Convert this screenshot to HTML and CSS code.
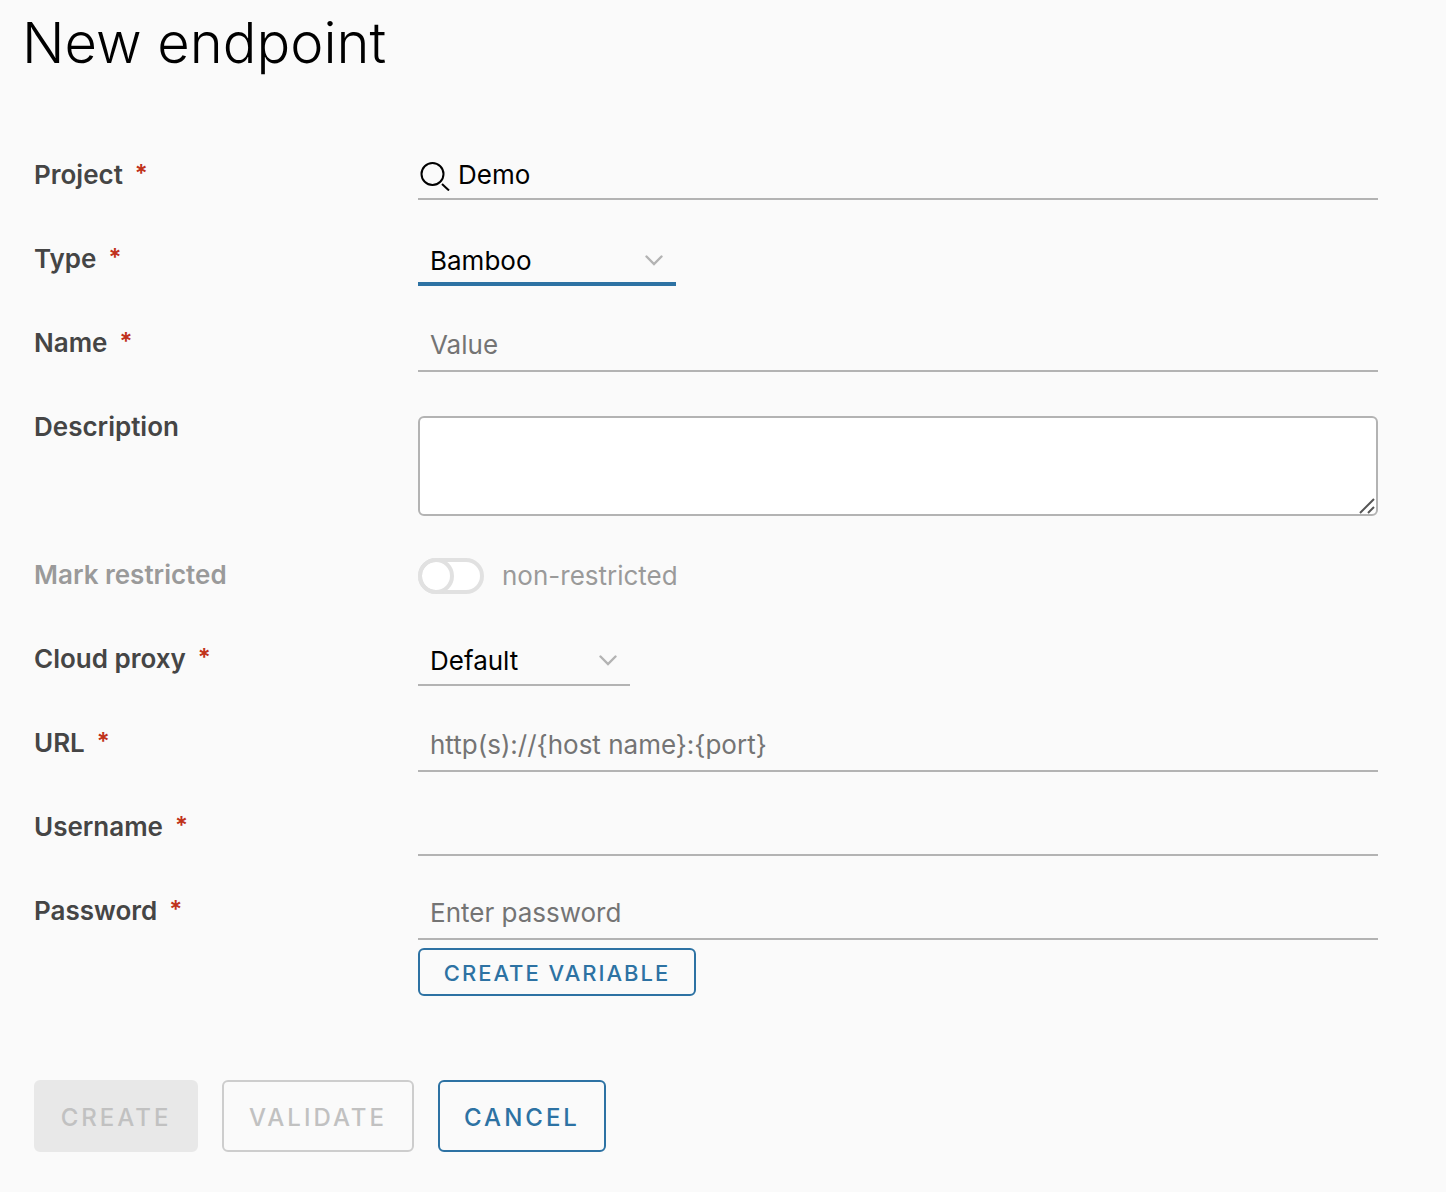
FILE: index.html
```html
<!DOCTYPE html>
<html lang="en">
<head>
<meta charset="utf-8">
<meta name="viewport" content="width=device-width, initial-scale=1">
<title>New endpoint</title>
<link rel="stylesheet" href="styles.css">
</head>
<body>
<main class="page">
  <h1 class="title">New endpoint</h1>
  <form class="form">
    <div class="row">
      <label class="label required" for="project">Project</label>
      <div class="control search">
        <svg class="search-icon" viewBox="0 0 32 32" aria-hidden="true"><circle cx="14.5" cy="15" r="11"/><path d="M24 25l7 6.500"/></svg>
        <input class="search-input" id="project" type="text" value="Demo">
      </div>
    </div>
    <div class="row">
      <label class="label required" for="type">Type</label>
      <div class="control select select-type">
        <select class="select-field focused" id="type"><option>Bamboo</option></select>
        <svg class="caret" viewBox="0 0 20 12" aria-hidden="true"><path d="M2.500 1.500l7.500 7.500L17.500 1.500"/></svg>
      </div>
    </div>
    <div class="row">
      <label class="label required" for="name">Name</label>
      <input class="control input" id="name" type="text" placeholder="Value">
    </div>
    <div class="row">
      <label class="label" for="description">Description</label>
      <div class="control area">
        <textarea class="textarea" id="description"></textarea>
        <svg class="grip" viewBox="0 0 16 16" aria-hidden="true"><path d="M1 15L15 1M9 15l6-6"/></svg>
      </div>
    </div>
    <div class="row">
      <label class="label disabled" for="restricted">Mark restricted</label>
      <div class="control toggle">
        <input class="switch" id="restricted" type="checkbox" role="switch" disabled>
        <label class="toggle-text" for="restricted">non-restricted</label>
      </div>
    </div>
    <div class="row">
      <label class="label required" for="proxy">Cloud proxy</label>
      <div class="control select select-proxy">
        <select class="select-field" id="proxy"><option>Default</option></select>
        <svg class="caret" viewBox="0 0 20 12" aria-hidden="true"><path d="M2.500 1.500l7.500 7.500L17.500 1.500"/></svg>
      </div>
    </div>
    <div class="row">
      <label class="label required" for="url">URL</label>
      <input class="control input" id="url" type="text" placeholder="http(s)://{host name}:{port}">
    </div>
    <div class="row">
      <label class="label required" for="username">Username</label>
      <input class="control input" id="username" type="text">
    </div>
    <div class="row">
      <label class="label required" for="password">Password</label>
      <div class="control stack">
        <input class="input" id="password" type="password" placeholder="Enter password">
        <button class="button small variable" type="button">CREATE VARIABLE</button>
      </div>
    </div>
    <div class="actions">
      <button class="button solid create" type="submit" disabled>CREATE</button>
      <button class="button validate" type="button" disabled>VALIDATE</button>
      <button class="button cancel" type="button">CANCEL</button>
    </div>
  </form>
</main>
</body>
</html>
```
FILE: styles.css
```css
*,
*::before,
*::after {
  box-sizing: border-box;
}

body {
  margin: 0;
  background: #fafafa;
  color: #000;
  font: 26px/36px Inter, "Liberation Sans", sans-serif;
}

.page {
  padding: 8px 68px 40px 22px;
}

.title {
  margin: 0 0 72px;
  padding-bottom: 2px;
  font-size: 56px;
  font-weight: 300;
  line-height: 70px;
}

.form {
  display: flex;
  flex-direction: column;
  gap: 24px;
  padding-left: 12px;
}

.row {
  display: grid;
  grid-template-columns: 384px minmax(0, 1fr);
  align-items: start;
  min-height: 60px;
}

.label {
  padding: 5px 0 7px;
  color: #454545;
  font-weight: 600;
}

.label.disabled {
  color: #9a9a9a;
}

.required::after {
  content: "*";
  display: inline-block;
  margin-left: 12px;
  padding-bottom: 2px;
  vertical-align: top;
  font-size: 24px;
  line-height: 34px;
  color: #c0321b;
}

.input,
.search-input,
.select-field,
.textarea {
  width: 100%;
  margin: 0;
  border: 0;
  border-radius: 0;
  outline: 0;
  background: transparent;
  color: #000;
  font: inherit;
}

.input {
  height: 52px;
  padding: 0 12px 2px;
  border-bottom: 2px solid #b3b3b3;
}

.input::placeholder {
  color: #747474;
  opacity: 1;
}

.search {
  display: flex;
  align-items: center;
  gap: 8px;
  height: 48px;
  border-bottom: 2px solid #b3b3b3;
}

.search-icon {
  flex: none;
  width: 32px;
  height: 32px;
  fill: none;
  stroke: #000;
  stroke-width: 2;
}

.search-input {
  padding: 0;
}

.select {
  display: grid;
  align-items: center;
}

.select-type {
  width: 258px;
}

.select-proxy {
  width: 212px;
}

.select-field,
.caret {
  grid-area: 1 / 1;
}

.select-field {
  height: 50px;
  padding: 2px 48px 0 12px;
  border-bottom: 2px solid #b3b3b3;
  appearance: none;
}

.select-field.focused {
  padding-top: 4px;
  border-bottom: 4px solid #2d72a3;
}

.caret {
  justify-self: end;
  width: 20px;
  height: 12px;
  margin-right: 12px;
  fill: none;
  stroke: #b3b3b3;
  stroke-width: 2.400;
  stroke-linecap: round;
  pointer-events: none;
}

.area {
  position: relative;
  margin-top: 12px;
  height: 112px;
}

.textarea {
  display: block;
  height: 100px;
  padding: 8px 12px;
  border: 2px solid #b3b3b3;
  border-radius: 6px;
  background: #fff;
  resize: none;
}

.grip {
  position: absolute;
  right: 3px;
  top: 82px;
  width: 16px;
  height: 16px;
  stroke: #555;
  stroke-width: 2;
  pointer-events: none;
}

.toggle {
  display: flex;
  align-items: center;
  gap: 18px;
  height: 48px;
  color: #9a9a9a;
}

.switch {
  display: block;
  width: 66px;
  height: 36px;
  margin: 0;
  border: 4px solid #e1e1e1;
  border-radius: 18px;
  background: #fff;
  appearance: none;
}

.switch::before {
  content: "";
  display: block;
  width: 36px;
  height: 36px;
  margin: -4px;
  border: 4px solid #e1e1e1;
  border-radius: 50%;
}

.stack {
  display: flex;
  flex-direction: column;
  align-items: flex-start;
  gap: 8px;
}

.button {
  height: 72px;
  padding: 4px 0 0;
  border: 2px solid #2d72a3;
  border-radius: 6px;
  background: transparent;
  color: #2d72a3;
  font: 500 24px/32px Inter, "Liberation Sans", sans-serif;
  letter-spacing: 3px;
  text-align: center;
}

.button:disabled {
  border-color: #cdcdcd;
  color: #c1c1c1;
}

.button.solid:disabled {
  border-color: #e8e8e8;
  background: #e8e8e8;
}

.button.small {
  height: 48px;
  padding: 2px 0 0;
  font-size: 22px;
  letter-spacing: 2px;
}

.variable {
  width: 278px;
}

.actions {
  display: flex;
  gap: 24px;
  margin-top: 60px;
}

.create {
  width: 164px;
}

.validate {
  width: 192px;
}

.cancel {
  width: 168px;
}
```
